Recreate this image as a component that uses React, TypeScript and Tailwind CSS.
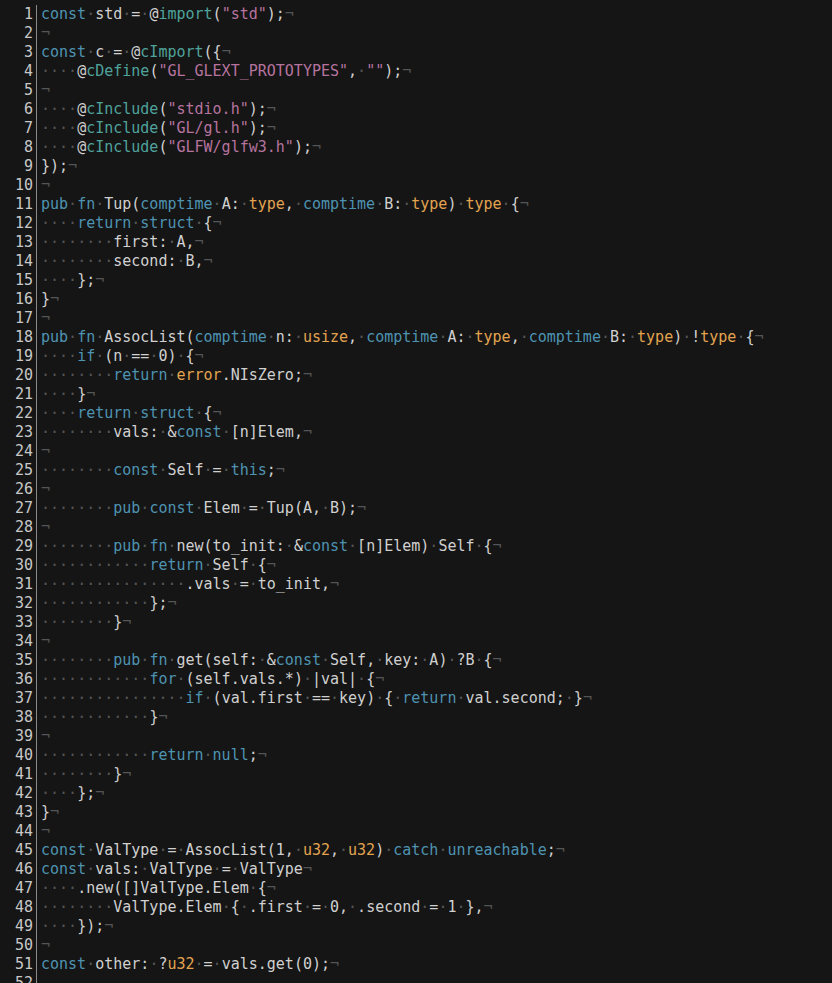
const source = `const std = @import("std");

const c = @cImport({
    @cDefine("GL_GLEXT_PROTOTYPES", "");

    @cInclude("stdio.h");
    @cInclude("GL/gl.h");
    @cInclude("GLFW/glfw3.h");
});

pub fn Tup(comptime A: type, comptime B: type) type {
    return struct {
        first: A,
        second: B,
    };
}

pub fn AssocList(comptime n: usize, comptime A: type, comptime B: type) !type {
    if (n == 0) {
        return error.NIsZero;
    }
    return struct {
        vals: &const [n]Elem,

        const Self = this;

        pub const Elem = Tup(A, B);

        pub fn new(to_init: &const [n]Elem) Self {
            return Self {
                .vals = to_init,
            };
        }

        pub fn get(self: &const Self, key: A) ?B {
            for (self.vals.*) |val| {
                if (val.first == key) { return val.second; }
            }

            return null;
        }
    };
}

const ValType = AssocList(1, u32, u32) catch unreachable;
const vals: ValType = ValType
    .new([]ValType.Elem {
        ValType.Elem { .first = 0, .second = 1 },
    });

const other: ?u32 = vals.get(0);
`

const keywords = new Set(["const", "pub", "fn", "return", "struct", "comptime", "if", "for", "catch", "unreachable", "this", "null"])
const types = new Set(["type", "usize", "u32", "error"])

type Tok = { text: string; cls: string }

function tokenize(line: string): Tok[] {
    const out: Tok[] = []
    let i = 0
    while (i < line.length) {
        const ch = line[i]
        if (ch === " ") {
            out.push({ text: "·", cls: "text-[#555555]" })
            i++
        } else if (ch === '"') {
            let j = line.indexOf('"', i + 1)
            out.push({ text: line.slice(i, j + 1), cls: "text-[#b5739f]" })
            i = j + 1
        } else if (ch === "@") {
            let j = i + 1
            while (j < line.length && /\w/.test(line[j])) j++
            out.push({ text: "@", cls: "text-[#d0d0d0]" })
            out.push({ text: line.slice(i + 1, j), cls: "text-[#4fa39c]" })
            i = j
        } else if (/[A-Za-z_]/.test(ch)) {
            let j = i
            while (j < line.length && /\w/.test(line[j])) j++
            const w = line.slice(i, j)
            let cls = "text-[#d0d0d0]"
            if (keywords.has(w)) cls = "text-[#4e93b1]"
            else if (types.has(w)) cls = "text-[#e3a450]"
            out.push({ text: w, cls })
            i = j
        } else {
            out.push({ text: ch, cls: "text-[#d0d0d0]" })
            i++
        }
    }
    out.push({ text: "¬", cls: "text-[#555555]" })
    return out
}

export default function App() {
    const lines = source.split("\n")

    return (
        <main className="bg-[#151515] w-[832px] h-[983px] overflow-hidden pt-[5px] font-['DejaVu_Sans_Mono',monospace] text-[15px] leading-[19px]">
            {lines.map((line, idx) => (
                <div key={idx} className="flex flex-row h-[19px]">
                    <div className="w-[33px] text-right text-[#c8c8c8]">{idx + 1}</div>
                    <div className="ml-[3px] pl-[4px] border-l border-[#8a8a8a] whitespace-pre flex-1">
                        {idx < lines.length - 1 && tokenize(line).map((t, k) => (
                            <span key={k} className={t.cls}>{t.text}</span>
                        ))}
                    </div>
                </div>
            ))}
        </main>
    )
}
